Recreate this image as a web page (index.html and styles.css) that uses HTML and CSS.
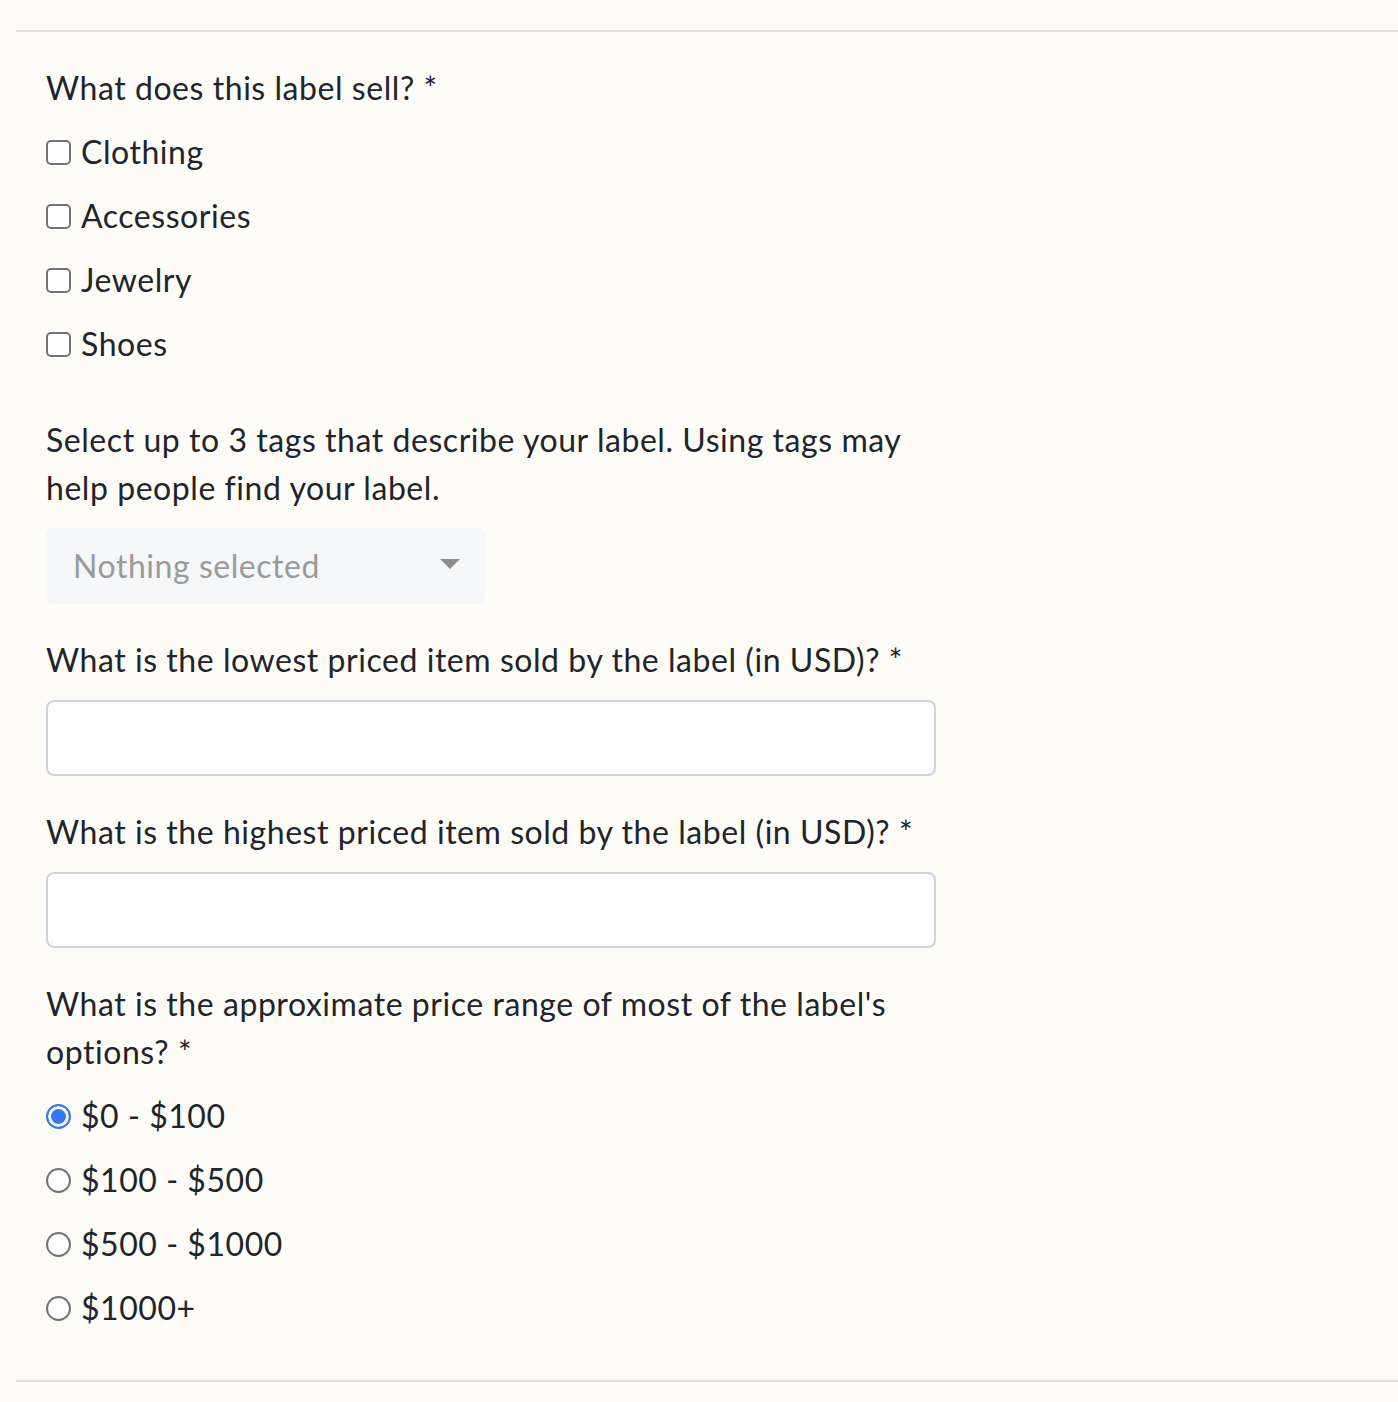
FILE: index.html
```html
<!DOCTYPE html>
<html lang="en">
<head>
<meta charset="utf-8">
<title>Label form</title>
<link rel="stylesheet" href="styles.css">
</head>
<body>
<div class="page">
  <form class="form">
    <div class="group">
      <div class="label">What does this label sell? *</div>
      <label class="check"><input type="checkbox" class="box"><span>Clothing</span></label>
      <label class="check"><input type="checkbox" class="box"><span>Accessories</span></label>
      <label class="check"><input type="checkbox" class="box"><span>Jewelry</span></label>
      <label class="check"><input type="checkbox" class="box"><span>Shoes</span></label>
    </div>
    <div class="group">
      <div class="label">Select up to 3 tags that describe your label. Using tags may help people find your label.</div>
      <div class="select">
        <span class="placeholder">Nothing selected</span>
        <span class="caret"></span>
      </div>
    </div>
    <div class="group">
      <div class="label">What is the lowest priced item sold by the label (in USD)? *</div>
      <input type="text" class="field">
    </div>
    <div class="group">
      <div class="label">What is the highest priced item sold by the label (in USD)? *</div>
      <input type="text" class="field">
    </div>
    <div class="group">
      <div class="label">What is the approximate price range of most of the label's options? *</div>
      <label class="check"><input type="radio" name="range" class="radio" checked><span>$0 - $100</span></label>
      <label class="check"><input type="radio" name="range" class="radio"><span>$100 - $500</span></label>
      <label class="check"><input type="radio" name="range" class="radio"><span>$500 - $1000</span></label>
      <label class="check"><input type="radio" name="range" class="radio"><span>$1000+</span></label>
    </div>
  </form>
</div>
</body>
</html>
```
FILE: styles.css
```css
html, body {
  margin: 0;
  padding: 0;
  background: #fdfcf7;
}
body {
  font-family: Lato, "Open Sans", sans-serif;
  font-size: 32px;
  line-height: 48px;
  letter-spacing: 0.55px;
  color: #212529;
}
.page {
  margin-left: 16px;
  margin-top: 30px;
  border-top: 2px solid #e2e1dc;
  border-bottom: 2px solid #e2e1dc;
  padding: 32px 0 0 30px;
}
.form {
  width: 890px;
  display: flex;
  flex-direction: column;
}
.group {
  display: flex;
  flex-direction: column;
  align-items: flex-start;
  margin-bottom: 32px;
}
.label {
  margin-bottom: 16px;
}
.check {
  display: flex;
  align-items: center;
  height: 48px;
  margin-bottom: 16px;
}
.box, .radio {
  appearance: none;
  -webkit-appearance: none;
  margin: 0 10px 0 0;
  width: 25px;
  height: 25px;
  border: 2px solid #727272;
  background: #fff;
  flex: none;
}
.box {
  border-radius: 5px;
}
.radio {
  border-radius: 50%;
}
.radio:checked {
  border-color: #3478f6;
  background: #3478f6;
  box-shadow: inset 0 0 0 3px #fff;
}
.select {
  width: 440px;
  height: 76px;
  box-sizing: border-box;
  background: #f5f7f9;
  border-radius: 8px;
  display: flex;
  align-items: center;
  justify-content: space-between;
  padding: 0 26px 0 27px;
}
.placeholder {
  color: #9a9a9a;
}
.caret {
  width: 0;
  height: 0;
  border-left: 10px solid transparent;
  border-right: 10px solid transparent;
  border-top: 10px solid #8c8c8c;
  margin-top: -4px;
}
.field {
  display: block;
  width: 890px;
  height: 76px;
  box-sizing: border-box;
  border: 2px solid #ced4da;
  border-radius: 8px;
  background: #fff;
  margin: 0;
  font: inherit;
}
```
